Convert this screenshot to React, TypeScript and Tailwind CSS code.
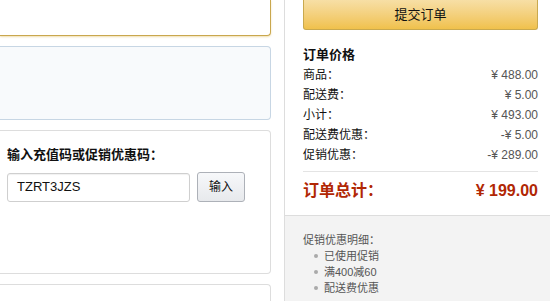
const rows = [
  { label: "商品：", value: "¥ 488.00" },
  { label: "配送费：", value: "¥ 5.00" },
  { label: "小计：", value: "¥ 493.00" },
  { label: "配送费优惠：", value: "-¥ 5.00" },
  { label: "促销优惠：", value: "-¥ 289.00" },
];

const promos = ["已使用促销", "满400减60", "配送费优惠"];

const font = "font-['Liberation_Sans','Noto_Sans_CJK_SC',sans-serif]";

export default function App() {
  return (
    <div className={`flex h-[301px] w-[550px] overflow-hidden bg-white text-[#333] ${font}`}>
      {/* Left column */}
      <div className="flex w-[271px] shrink-0 flex-col">
        <div className="h-[36px] shrink-0 rounded-br-[4px] border-r border-b border-[#c9a74e] bg-white shadow-[0_1px_2px_rgba(230,200,120,0.6)]" />
        <div className="mt-[10px] h-[74px] shrink-0 rounded-r-[4px] border-y border-r border-[#c7d6e4] bg-[#f8fafc]" />
        <div className="mt-[10px] h-[144px] shrink-0 rounded-r-[4px] border-y border-r border-[#dddddd] bg-white px-[7px] pt-[14px]">
          <div className="text-[13px] font-bold leading-[20px] text-[#111]">输入充值码或促销优惠码：</div>
          <div className="mt-[7px] flex items-center gap-[7px]">
            <div className="flex h-[29px] w-[183px] items-center rounded-[3px] border border-[#cfcfcf] bg-white pl-[9px] text-[13px] text-[#111] shadow-[inset_0_1px_1px_rgba(0,0,0,0.06)]">
              TZRT3JZS
            </div>
            <button className="flex h-[30px] w-[48px] items-center justify-center rounded-[3px] border border-[#adb1b8] bg-gradient-to-b from-[#f7f8fa] to-[#e7e9ec] text-[12px] text-[#111]">
              输入
            </button>
          </div>
        </div>
        <div className="mt-[10px] h-[40px] shrink-0 rounded-tr-[4px] border-t border-r border-[#dddddd] bg-white" />
      </div>

      {/* Right column */}
      <div className="ml-[13px] flex w-[266px] shrink-0 flex-col border-l border-[#dddddd]">
        <div className="bg-white pr-[12px] pl-[18px]">
          <button className="flex h-[30px] w-full items-center justify-center rounded-b-[3px] border-x border-b border-[#c9a94e] bg-gradient-to-b from-[#f7dfa5] to-[#f0c14b] text-[13px] text-[#111]">
            提交订单
          </button>
          <div className="mt-[15px] text-[13px] font-bold leading-[20px] text-[#111]">订单价格</div>
          {rows.map((r) => (
            <div key={r.label} className="flex justify-between text-[12px] leading-[20px]">
              <span className="text-[#111]">{r.label}</span>
              <span className="text-[#555]">{r.value}</span>
            </div>
          ))}
          <div className="mt-[6px] flex justify-between border-t border-[#e4e4e4] pt-[9px] pb-[14px] text-[16px] font-bold leading-[20px] text-[#b12704]">
            <span>订单总计：</span>
            <span>¥ 199.00</span>
          </div>
        </div>
        <div className="flex-1 border-t border-[#dddddd] bg-[#f3f3f3] pt-[16px] pl-[18px] text-[11px] leading-[16px] text-[#555]">
          <div>促销优惠明细：</div>
          <ul className="ml-[11px]">
            {promos.map((p) => (
              <li key={p} className="flex items-center gap-[6px]">
                <span className="h-[4px] w-[4px] rounded-full bg-[#aaa]" />
                {p}
              </li>
            ))}
          </ul>
        </div>
      </div>
    </div>
  );
}
